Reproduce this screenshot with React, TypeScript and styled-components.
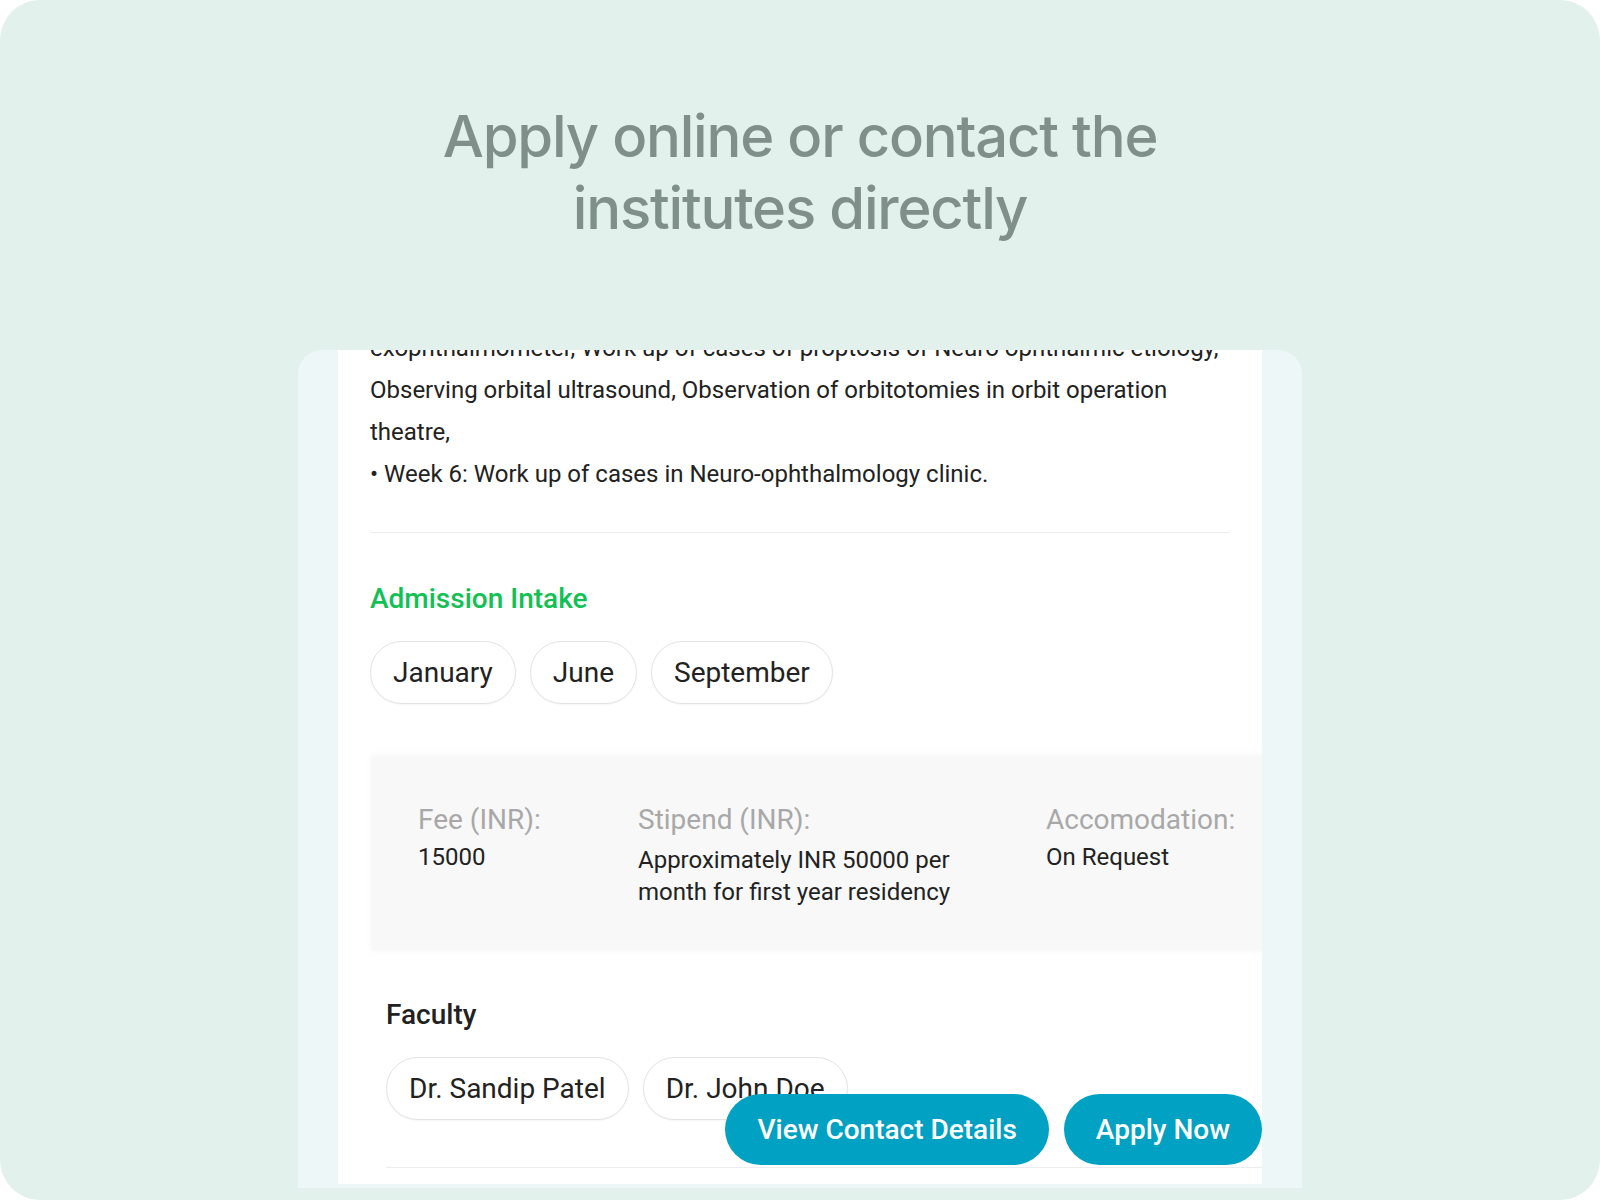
import React from 'react'
import styled, { createGlobalStyle } from 'styled-components'

const GlobalStyle = createGlobalStyle`
  html, body {
    margin: 0;
    padding: 0;
    background: #ffffff;
  }
  * {
    box-sizing: border-box;
  }
`;

const intakes = ['January', 'June', 'September'];
const faculty = ['Dr. Sandip Patel', 'Dr. John Doe'];

const descriptionLines = [
  'exophthalmometer, Work up of cases of proptosis of Neuro ophthalmic etiology,',
  'Observing orbital ultrasound, Observation of orbitotomies in orbit operation',
  'theatre,',
  '\u2022 Week 6: Work up of cases in Neuro-ophthalmology clinic.',
];

const App = () => {
  return (
    <>
      <GlobalStyle />
      <Page>
        <Heading>
          Apply online or contact the
          <br />
          institutes directly
        </Heading>
        <Panel>
          <Card>
            <Description>
              {descriptionLines.map((line) => (
                <Line key={line}>{line}</Line>
              ))}
            </Description>
            <Divider />
            <SectionTitle>Admission Intake</SectionTitle>
            <ChipRow>
              {intakes.map((m) => (
                <Chip key={m}>{m}</Chip>
              ))}
            </ChipRow>
            <InfoBox>
              <InfoItem>
                <InfoLabel>Fee (INR):</InfoLabel>
                <InfoValue>15000</InfoValue>
              </InfoItem>
              <InfoItem>
                <InfoLabel>Stipend (INR):</InfoLabel>
                <InfoValue wide>Approximately INR 50000 per month for first year residency</InfoValue>
              </InfoItem>
              <InfoItem>
                <InfoLabel>Accomodation:</InfoLabel>
                <InfoValue>On Request</InfoValue>
              </InfoItem>
            </InfoBox>
            <FacultyBlock>
              <FacultyTitle>Faculty</FacultyTitle>
              <ChipRow>
                {faculty.map((f) => (
                  <Chip key={f}>{f}</Chip>
                ))}
              </ChipRow>
              <Divider bottom />
            </FacultyBlock>
            <ActionBar>
              <ActionButton>View Contact Details</ActionButton>
              <ActionButton>Apply Now</ActionButton>
            </ActionBar>
          </Card>
        </Panel>
      </Page>
    </>
  )
}

export default App

const Page = styled.div`
  width: 1600px;
  height: 1200px;
  background: #e2f1ec;
  border-radius: 40px;
  overflow: hidden;
  display: flex;
  flex-direction: column;
  align-items: center;
`;

const Heading = styled.h1`
  margin: 100px 0 0;
  font-family: Inter, "Open Sans", sans-serif;
  font-weight: 500;
  font-size: 58px;
  line-height: 72px;
  letter-spacing: -1.2px;
  color: #7f8f89;
  text-align: center;
`;

const Panel = styled.div`
  margin-top: 106px;
  width: 1004px;
  height: 838px;
  background: #edf7f8;
  border-radius: 24px 24px 0 0;
  padding: 0 40px 4px;
  display: flex;
`;

const Card = styled.div`
  position: relative;
  flex: 1;
  background: #ffffff;
  padding: 0 32px;
  overflow: hidden;
  font-family: Roboto, "Liberation Sans", sans-serif;
  color: #222222;
`;

const Description = styled.div`
  margin-top: -23px;
  font-size: 24px;
  line-height: 42px;
`;

const Line = styled.div`
  white-space: nowrap;
`;

const Divider = styled.hr<{ bottom?: boolean }>`
  border: none;
  height: 1px;
  background: #ededed;
  margin: ${(p) => (p.bottom ? '47px -32px 0 0' : '37px 0 0')};
`;

const SectionTitle = styled.h3`
  margin: 50px 0 0;
  font-size: 28px;
  line-height: 32px;
  font-weight: 500;
  color: #12c153;
`;

const ChipRow = styled.div`
  display: flex;
  gap: 14px;
  margin-top: 26px;
`;

const Chip = styled.div`
  height: 63px;
  padding: 0 22px;
  border: 1.5px solid #e3e3e3;
  border-radius: 32px;
  display: flex;
  align-items: center;
  font-size: 28px;
  color: #222222;
  background: #ffffff;
  box-shadow: 0 1px 2px rgba(0, 0, 0, 0.04);
`;

const InfoBox = styled.div`
  margin: 52px -40px 0 2px;
  height: 194px;
  background: #f8f8f8;
  box-shadow: 0 0 8px rgba(0, 0, 0, 0.05);
  padding: 48px 0 0 46px;
  display: grid;
  grid-template-columns: 220px 408px 1fr;
`;

const InfoItem = styled.div`
  display: flex;
  flex-direction: column;
`;

const InfoLabel = styled.div`
  font-size: 28px;
  line-height: 32px;
  color: #a8a8a8;
  white-space: nowrap;
`;

const InfoValue = styled.div<{ wide?: boolean }>`
  margin-top: ${(p) => (p.wide ? '8px' : '5px')};
  font-size: 24px;
  line-height: 32px;
  color: #222222;
  max-width: ${(p) => (p.wide ? '335px' : 'none')};
`;

const FacultyBlock = styled.div`
  margin-top: 49px;
  padding-left: 16px;
`;

const FacultyTitle = styled.h4`
  margin: 0;
  font-size: 28px;
  line-height: 32px;
  font-weight: 500;
  color: #222222;
`;

const ActionBar = styled.div`
  position: absolute;
  right: 0;
  bottom: 19px;
  display: flex;
  gap: 15px;
`;

const ActionButton = styled.button`
  height: 71px;
  padding: 0 32px;
  border: none;
  border-radius: 36px;
  background: #01a1c3;
  color: #ffffff;
  font-family: Roboto, "Liberation Sans", sans-serif;
  font-size: 28px;
  font-weight: 500;
  cursor: pointer;
`;
